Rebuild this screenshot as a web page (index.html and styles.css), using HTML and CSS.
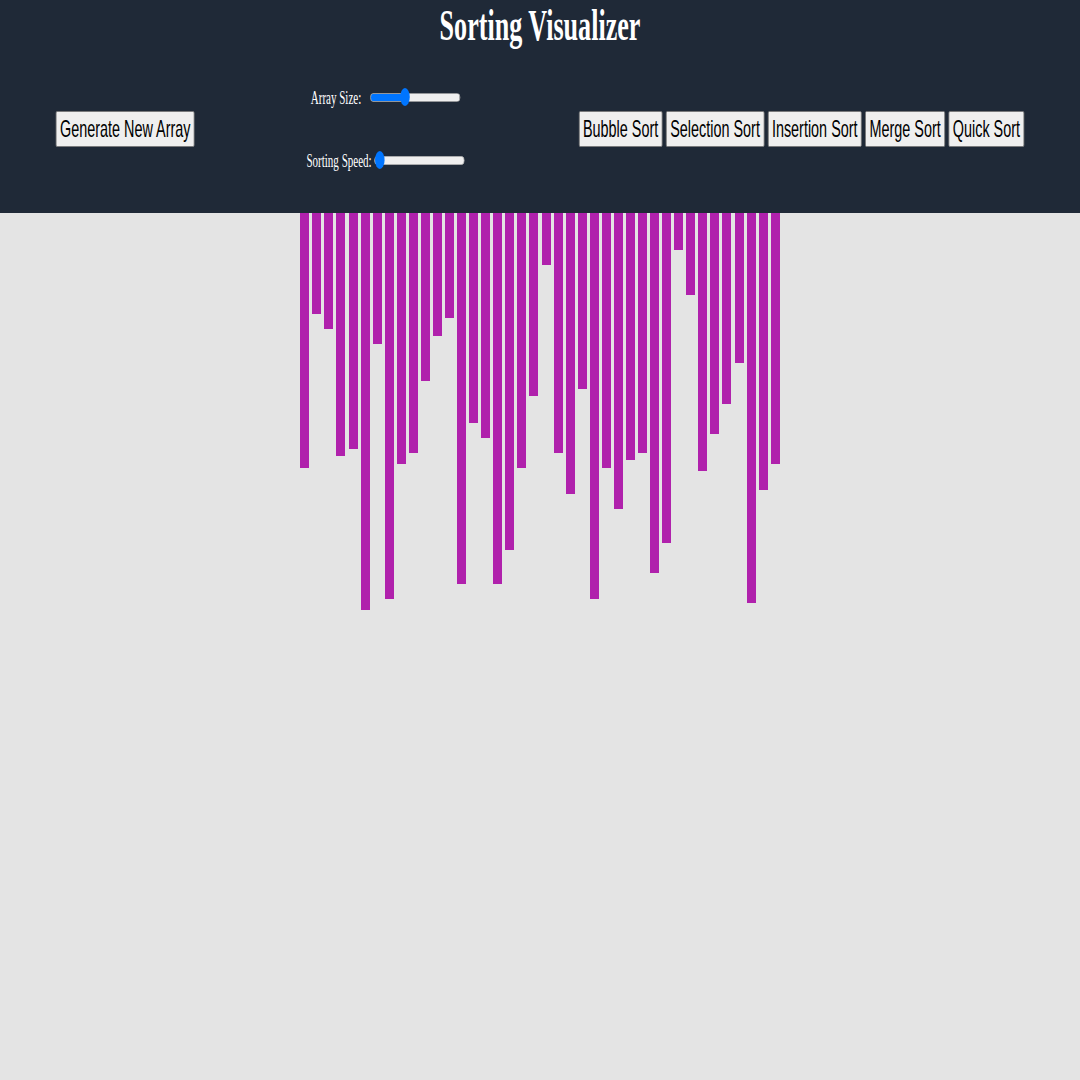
FILE: index.html
```html
<!DOCTYPE html>
<html lang="en">
<head>
<meta charset="utf-8">
<title>Sorting Visualizer</title>
<link rel="stylesheet" href="styles.css">
</head>
<body>
<header class="topbar">
  <div class="stretch">
    <h1 class="title">Sorting Visualizer</h1>
    <div class="controls">
      <button class="btn">Generate New Array</button>
      <div class="sliders">
        <div class="slider-row">
          <label class="slider-label size-label" for="size">Array Size:</label>
          <input id="size" class="range range-size" type="range" min="5" max="100" value="40">
        </div>
        <div class="slider-row">
          <label class="slider-label speed-label" for="speed">Sorting Speed:</label>
          <input id="speed" class="range range-speed" type="range" min="1" max="100" value="1">
        </div>
      </div>
      <div class="algos">
        <button class="btn">Bubble Sort</button>
        <button class="btn">Selection Sort</button>
        <button class="btn">Insertion Sort</button>
        <button class="btn">Merge Sort</button>
        <button class="btn">Quick Sort</button>
      </div>
    </div>
  </div>
</header>
<main class="bars">
  <div class="bar" style="height:255px"></div>
  <div class="bar" style="height:101px"></div>
  <div class="bar" style="height:116px"></div>
  <div class="bar" style="height:243px"></div>
  <div class="bar" style="height:236px"></div>
  <div class="bar" style="height:397px"></div>
  <div class="bar" style="height:131px"></div>
  <div class="bar" style="height:386px"></div>
  <div class="bar" style="height:251px"></div>
  <div class="bar" style="height:240px"></div>
  <div class="bar" style="height:168px"></div>
  <div class="bar" style="height:123px"></div>
  <div class="bar" style="height:105px"></div>
  <div class="bar" style="height:371px"></div>
  <div class="bar" style="height:210px"></div>
  <div class="bar" style="height:225px"></div>
  <div class="bar" style="height:371px"></div>
  <div class="bar" style="height:337px"></div>
  <div class="bar" style="height:255px"></div>
  <div class="bar" style="height:183px"></div>
  <div class="bar" style="height:52px"></div>
  <div class="bar" style="height:240px"></div>
  <div class="bar" style="height:281px"></div>
  <div class="bar" style="height:176px"></div>
  <div class="bar" style="height:386px"></div>
  <div class="bar" style="height:255px"></div>
  <div class="bar" style="height:296px"></div>
  <div class="bar" style="height:247px"></div>
  <div class="bar" style="height:240px"></div>
  <div class="bar" style="height:360px"></div>
  <div class="bar" style="height:330px"></div>
  <div class="bar" style="height:37px"></div>
  <div class="bar" style="height:82px"></div>
  <div class="bar" style="height:258px"></div>
  <div class="bar" style="height:221px"></div>
  <div class="bar" style="height:191px"></div>
  <div class="bar" style="height:150px"></div>
  <div class="bar" style="height:390px"></div>
  <div class="bar" style="height:277px"></div>
  <div class="bar" style="height:251px"></div>
</main>
</body>
</html>
```

FILE: styles.css
```css
html, body {
  margin: 0;
  padding: 0;
}

body {
  background: #e4e4e4;
  overflow: hidden;
  font-family: "Liberation Serif", "Times New Roman", serif;
}

.topbar {
  height: 213px;
  background: #1f2937;
  overflow: hidden;
}

/* the header is laid out wide and squeezed horizontally */
.stretch {
  width: 1800px;
  height: 213px;
  transform: scaleX(0.6);
  transform-origin: 0 0;
  display: flex;
  flex-direction: column;
}

.title {
  margin: 0;
  padding-top: 1px;
  height: 49px;
  line-height: 49px;
  font-size: 43.5px;
  font-weight: bold;
  color: #ffffff;
  text-align: center;
}

.controls {
  height: 157px;
  padding: 0 93px;
  display: flex;
  align-items: center;
  justify-content: space-between;
}

.btn {
  font-family: "Liberation Sans", Arial, sans-serif;
  font-size: 24px;
  line-height: 28px;
  padding: 3px 6px;
  margin: 0;
  color: #000000;
  background: #efefef;
  border: 1px solid #767676;
  border-radius: 2px;
}

.algos {
  display: flex;
  gap: 6px;
  margin-left: -4px;
}

.sliders {
  display: flex;
  flex-direction: column;
  align-items: center;
  gap: 43px;
  margin-right: 8px;
}

.slider-row {
  height: 20px;
  display: flex;
  align-items: center;
}

.slider-label {
  font-size: 18.4px;
  line-height: 20px;
  color: #ffffff;
  position: relative;
  top: 1px;
}

.size-label {
  margin-right: 15px;
}

.speed-label {
  margin-right: 5px;
}

.range {
  -webkit-appearance: none;
  appearance: none;
  width: 150px;
  height: 9px;
  margin: 0;
  border: 1px solid #b3b3b3;
  border-radius: 5px;
  background: #efefef;
  box-sizing: border-box;
}

.range-size {
  background: linear-gradient(to right, #0075ff 0, #0075ff 38%, #efefef 38%, #efefef 100%);
}

.range::-webkit-slider-thumb {
  -webkit-appearance: none;
  appearance: none;
  width: 16px;
  height: 18px;
  border-radius: 50%;
  background: #0075ff;
  border: none;
}

.bars {
  display: flex;
  justify-content: center;
  align-items: flex-start;
  gap: 3.077px;
}

.bar {
  width: 9px;
  background: #b021ac;
}
```
